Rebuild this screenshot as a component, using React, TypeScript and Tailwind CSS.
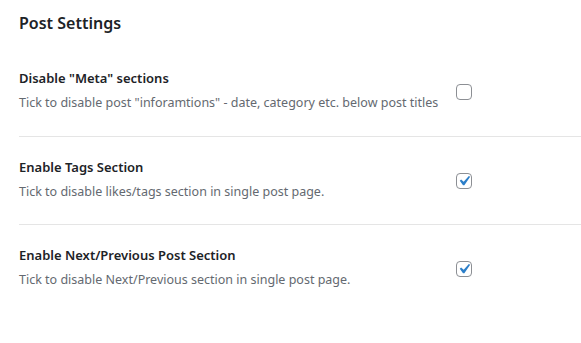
const settings = [
  {
    title: 'Disable "Meta" sections',
    desc: 'Tick to disable post "inforamtions" - date, category etc. below post titles',
    checked: false,
  },
  {
    title: 'Enable Tags Section',
    desc: 'Tick to disable likes/tags section in single post page.',
    checked: true,
  },
  {
    title: 'Enable Next/Previous Post Section',
    desc: 'Tick to disable Next/Previous section in single post page.',
    checked: true,
  },
];

function Checkbox({ checked }: { checked: boolean }) {
  return (
    <div className="w-4 h-4 rounded-[4px] border border-[#8c8f94] bg-white flex items-center justify-center overflow-visible">
      {checked && (
        <svg width="20" height="20" viewBox="0 0 20 20" className="shrink-0 -m-[3px]">
          <path d="M14.83 4.89l1.34.94-5.81 8.38H9.02L5.78 9.67l1.34-1.25 2.57 2.4z" fill="#2c7fc9" />
        </svg>
      )}
    </div>
  );
}

export default function App() {
  return (
    <div className="w-[581px] h-[343px] bg-white pl-[19px] pt-[11px] font-['Noto_Sans',sans-serif]">
      {/* Heading */}
      <h2 className="text-[16px] leading-6 font-semibold text-[#1d2327] h-[37px]">Post Settings</h2>

      {settings.map((s, i) => (
        <div key={i} className={`flex h-[88px] ${i > 0 ? 'border-t border-[#e5e5e5]' : ''}`}>
          <div className="w-[437px] pt-5">
            <div className="text-[13px] leading-5 font-semibold text-[#1d2327]">{s.title}</div>
            <div className="mt-[5px] text-[12.5px] leading-5 text-[#646970]">{s.desc}</div>
          </div>
          <div className="pt-9">
            <Checkbox checked={s.checked} />
          </div>
        </div>
      ))}
    </div>
  );
}
